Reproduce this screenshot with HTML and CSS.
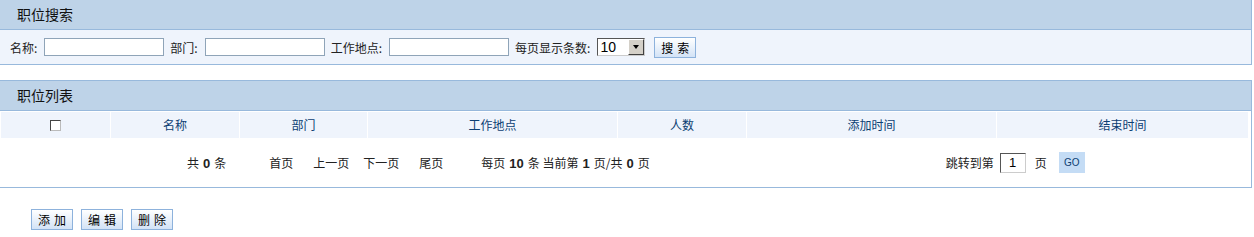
FILE: index.html
```html
<!DOCTYPE html>
<html lang="zh-CN">
<head>
    <meta charset="UTF-8">
    <title>职位管理</title>
    <link rel="stylesheet" href="styles.css">
</head>
<body>

    <div class="panel">
        <div class="panel-title">职位搜索</div>
        <div class="search-row">
            <label>名称:</label>
            <input type="text" class="txt">
            <label>部门:</label>
            <input type="text" class="txt">
            <label>工作地点:</label>
            <input type="text" class="txt">
            <label>每页显示条数:</label>
            <span class="fake-select">
                <span class="sel-value">10</span>
                <span class="sel-arrow"></span>
            </span>
            <button type="button" class="btn search-btn">搜索</button>
        </div>
    </div>

    <div class="panel list-panel">
        <div class="panel-title">职位列表</div>
        <div class="grid-head">
            <div class="cell"><span class="check"></span></div>
            <div class="cell">名称</div>
            <div class="cell">部门</div>
            <div class="cell">工作地点</div>
            <div class="cell">人数</div>
            <div class="cell">添加时间</div>
            <div class="cell">结束时间</div>
        </div>
        <div class="pager">
            <span class="total">共<b>0</b>条</span>
            <span class="links">
                <a>首页</a><a>上一页</a><a>下一页</a><a>尾页</a>
            </span>
            <span class="info">每页<b>10</b>条 当前第<b>1</b>页/共<b>0</b>页</span>
            <span class="jump">
                跳转到第<input type="text" class="page-no" value="1"><span class="ye">页</span>
                <button type="button" class="go-btn">GO</button>
            </span>
        </div>
    </div>

    <div class="actions">
        <button type="button" class="btn">添加</button>
        <button type="button" class="btn">编辑</button>
        <button type="button" class="btn">删除</button>
    </div>

</body>
</html>
```

FILE: styles.css
```css
* {
    margin: 0;
    padding: 0;
    box-sizing: border-box;
}

body {
    margin: 0;
    width: 1254px;
    background: #fff;
    color: #222;
    font-family: "Noto Sans CJK SC", "DejaVu Sans", sans-serif;
    font-size: 12px;
}

.panel {
    width: 1252px;
    border-right: 1px solid #98b9dc;
    border-bottom: 1px solid #98b9dc;
}

.list-panel {
    margin-top: 15px;
    border-top: 1px solid #98b9dc;
}

.panel-title {
    height: 30px;
    line-height: 29px;
    padding-left: 17px;
    background: #bed3e8;
    border-bottom: 1px solid #98b9dc;
    color: #111;
    font-size: 14px;
}

.search-row {
    height: 34px;
    display: flex;
    align-items: center;
    padding-left: 10px;
    background: #eff4fc;
}

.search-row label {
    margin-right: 7px;
}

.txt {
    width: 120px;
    height: 18px;
    margin-right: 6px;
    border: 1px solid #8fa4b8;
    background: #fff;
    font-size: 12px;
}

.fake-select {
    display: flex;
    width: 48px;
    height: 18px;
    border: 1px solid #555;
    border-right-color: #ccc;
    border-bottom-color: #ccc;
    background: #fff;
}

.sel-value {
    flex: 1;
    font-family: "Liberation Sans", sans-serif;
    font-size: 14px;
    line-height: 16px;
    padding-left: 2px;
    color: #000;
}

.sel-arrow {
    width: 16px;
    height: 16px;
    background: #d4d0c8;
    border: 1px solid;
    border-color: #fff #404040 #404040 #fff;
    position: relative;
}

.sel-arrow::after {
    content: "";
    position: absolute;
    left: 4px;
    top: 5px;
    border-left: 3px solid transparent;
    border-right: 3px solid transparent;
    border-top: 4px solid #000;
}

.btn {
    width: 42px;
    height: 21px;
    padding: 0 0 0 4px;
    border: 1px solid #8db2dc;
    background: linear-gradient(#ffffff, #d3e3f6);
    color: #000;
    font-family: "Noto Sans CJK SC", sans-serif;
    font-size: 12px;
    letter-spacing: 4px;
    cursor: pointer;
}

.search-btn {
    margin-left: 9px;
}

.grid-head {
    display: grid;
    grid-template-columns: 109px 128px 127px 249px 128px 249px 251px;
    column-gap: 1px;
    padding-left: 1px;
    margin-top: 1px;
}

.cell {
    height: 26px;
    line-height: 25px;
    background: #eff4fc;
    color: #0d3f73;
    text-align: center;
}

.check {
    display: inline-block;
    width: 11px;
    height: 11px;
    border: 1px solid #444;
    border-right-color: #bbb;
    border-bottom-color: #bbb;
    background: #fff;
    vertical-align: -1px;
}

.pager {
    height: 49px;
    display: flex;
    align-items: center;
    padding-left: 187px;
    color: #222;
}

.pager b {
    margin: 0 4px;
    font-family: "Liberation Sans", sans-serif;
    font-size: 13px;
    font-weight: bold;
}

.links {
    margin-left: 43px;
}

.links a {
    margin-right: 20px;
}

.links a:nth-child(2) {
    margin-right: 14px;
}

.links a:last-child {
    margin-right: 0;
}

.info {
    margin-left: 38px;
}

.jump {
    margin-left: 296px;
    display: flex;
    align-items: center;
}

.page-no {
    width: 26px;
    height: 20px;
    margin-left: 6px;
    border: 1px solid #555;
    border-right-color: #ccc;
    border-bottom-color: #ccc;
    text-align: center;
    font-family: "Liberation Sans", sans-serif;
    font-size: 13px;
}

.ye {
    margin-left: 9px;
}

.go-btn {
    width: 26px;
    height: 21px;
    margin-left: 12px;
    border: none;
    background: #c4dcf5;
    color: #0d3f73;
    font-family: "Liberation Sans", sans-serif;
    font-size: 10px;
}

.actions {
    display: flex;
    gap: 8px;
    padding: 21px 0 0 31px;
}
```
